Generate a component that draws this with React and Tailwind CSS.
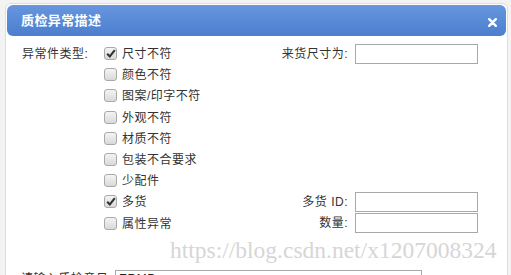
import React from "react";

const options = [
  { label: "尺寸不符", checked: true, right: { label: "来货尺寸为:" } },
  { label: "颜色不符" },
  { label: "图案/印字不符" },
  { label: "外观不符" },
  { label: "材质不符" },
  { label: "包装不合要求" },
  { label: "少配件" },
  { label: "多货", checked: true, right: { label: "多货 ID:" } },
  { label: "属性异常", right: { label: "数量:" } },
];

function Check({ checked }) {
  return (
    <span className="w-[13px] h-[13px] shrink-0 rounded-[3px] border border-[#a9a9a9] bg-gradient-to-b from-[#f4f4f4] to-[#d9d9d9] flex items-center justify-center">
      {checked && (
        <svg width="10" height="9" viewBox="0 0 10 9">
          <path d="M1.2 4.8 L3.8 7.4 L8.8 1.2" fill="none" stroke="#333" strokeWidth="2.1" />
        </svg>
      )}
    </span>
  );
}

export default function App() {
  return (
    <div
      className="w-[511px] h-[275px] overflow-hidden bg-[#f3f3f3] pt-[3px] pl-[5px] relative"
      style={{ fontFamily: '"Liberation Sans", "Noto Sans CJK SC", sans-serif' }}
    >
      <div className="w-[503px] h-[300px] bg-white border border-[#d9dfe7] rounded-t-[6px] p-[1px]">
        {/* Header */}
        <div className="h-[31px] rounded-[6px] bg-gradient-to-b from-[#6796de] to-[#4c7ecf] flex items-center justify-between pl-[14px] pr-[9px]">
          <span className="text-white font-bold text-[13px] tracking-[0.4px]">质检异常描述</span>
          <svg width="9" height="9" viewBox="0 0 9 9" className="mt-[3px]">
            <path d="M1.2 1.2 L7.8 7.8 M7.8 1.2 L1.2 7.8" stroke="#fff" strokeWidth="2.4" strokeLinecap="round" />
          </svg>
        </div>

        {/* Body */}
        <div className="pt-[7px] pl-[14px] text-[12px] text-[#333] tracking-[0.5px]">
          {options.map((o, i) => (
            <div key={o.label} className="h-[21.2px] flex items-center">
              <div className="w-[83px] pl-[1px]">{i === 0 ? "异常件类型:" : ""}</div>
              <div className="w-[151px] flex items-center gap-[5px]">
                <Check checked={o.checked} />
                <span className="leading-none pt-[1px]">{o.label}</span>
              </div>
              {o.right && (
                <div className="flex items-center">
                  <span className="w-[100px] text-right pr-[7px]">{o.right.label}</span>
                  <input
                    className="w-[123px] h-[20px] border border-[#a9a9a9] outline-none bg-white"
                    defaultValue=""
                  />
                </div>
              )}
            </div>
          ))}

          <div className="mt-[36px] flex items-start">
            <span className="w-[94px] leading-none pt-[3px]">请输入质检意见:</span>
            <div className="w-[307px] h-[22px] border border-[#a9a9a9] pl-[3px] pt-[2px] leading-none text-[12px] text-[#222]">
              ERMP
            </div>
          </div>
        </div>
      </div>

      {/* watermark */}
      <div
        className="absolute left-[170px] top-[239px] text-[23.5px] text-[#d6d6d6] leading-none pointer-events-none select-none"
        style={{ fontFamily: '"Liberation Serif", serif' }}
      >
        https://blog.csdn.net/x1207008324
      </div>
    </div>
  );
}
